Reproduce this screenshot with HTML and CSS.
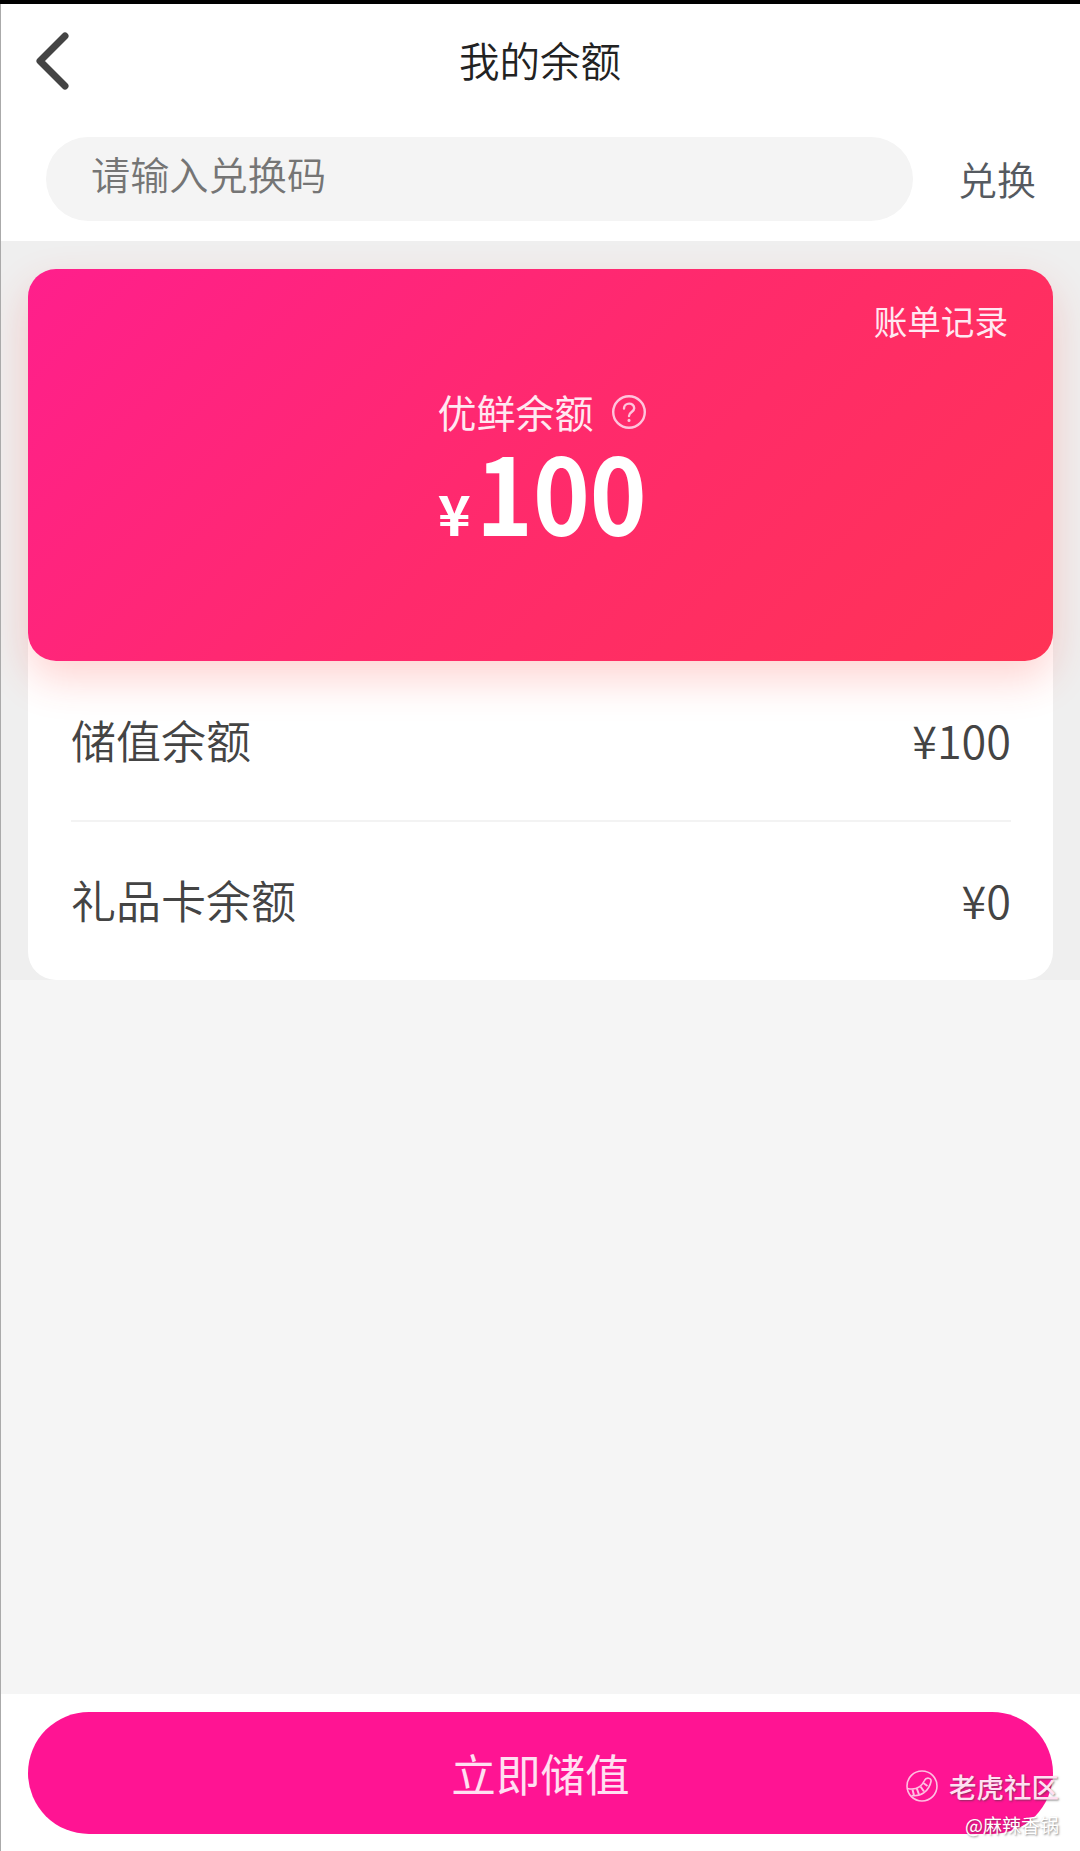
FILE: index.html
```html
<!DOCTYPE html>
<html lang="zh-CN">
<head>
  <meta charset="UTF-8">
  <meta name="viewport" content="width=device-width, initial-scale=1.0">
  <title>我的余额</title>
  <link rel="stylesheet" href="styles.css">
</head>
<body>

<div class="page">
  <header class="header">
    <svg class="back" width="40" height="64" viewBox="0 0 40 64" fill="none" stroke="#444" stroke-width="7" stroke-linecap="round" stroke-linejoin="round">
      <path d="M32 7 L7 32 L32 57"/>
    </svg>
    <h1>我的余额</h1>
  </header>

  <div class="redeem">
    <input class="code" type="text" placeholder="请输入兑换码">
    <span class="redeem-btn">兑换</span>
  </div>

  <main class="account">
    <section class="card">
      <div class="bill">账单记录</div>
      <div class="label">
        <span>优鲜余额</span>
        <svg width="36" height="36" viewBox="0 0 36 36" fill="none" stroke="#ffc4dc" stroke-width="2.4" stroke-linecap="round">
          <circle cx="18" cy="18" r="15.8"/>
          <path d="M13 14.5 C13 8 23.2 8 23.2 14.2 C23.2 18 18 18 18 22"/>
          <path d="M18 26.3 V26.6" stroke-width="3"/>
        </svg>
      </div>
      <div class="total"><span class="unit">¥</span><span class="sum">100</span></div>
    </section>
    <section class="detail">
      <div class="row"><span>储值余额</span><span>¥100</span></div>
      <div class="row"><span>礼品卡余额</span><span>¥0</span></div>
    </section>
  </main>

  <footer class="footer">
    <button class="recharge">立即储值</button>
  </footer>
</div>

<div class="mark">
  <div class="mark-name">
    <svg width="34" height="34" viewBox="0 0 34 34" fill="none" stroke="#ffc0e2" stroke-width="1.6">
      <circle cx="17" cy="17" r="15"/>
      <path d="M2.5 19.5 C11 21.5 16.5 17.5 19.5 11.5 C21 8 26.8 8.5 26 12.5 C24 22 16 28 6.5 26.5"/>
      <path d="M7.5 20.5 L9 26.5 M11.8 19.5 L14 25.5 M15.5 17.5 L19 22.5 M18.3 14 L22.5 17" stroke-width="2"/>
    </svg>
    <span>老虎社区</span>
  </div>
  <div class="mark-user">@麻辣香锅</div>
</div>

</body>
</html>
```

FILE: styles.css
```css
* {
  box-sizing: border-box;
}
body {
  margin: 0;
  font-family: "Noto Sans CJK SC", sans-serif;
  color: #444;
  background-color: #f5f5f5;
}
.page {
  display: flex;
  flex-direction: column;
  height: 1851px;
  border-top: 4px solid #000;
  position: relative;
}
/* thin line down the left edge */
.page::before {
  content: "";
  position: absolute;
  top: 0;
  left: 0;
  width: 1px;
  height: 100%;
  background-color: #aaa;
  z-index: 2;
}
.header {
  display: grid;
  grid-template-columns: 80px 1fr 80px;
  align-items: center;
  height: 113px;
  background-color: #fff;
}
.back {
  margin-left: 33px;
}
.header h1 {
  margin: 0;
  padding-bottom: 2px;
  font-size: 40.5px;
  font-weight: 350;
  line-height: 60px;
  text-align: center;
  color: #222;
}
.redeem {
  display: flex;
  align-items: center;
  height: 124px;
  padding: 0 44px 0 46px;
  background-color: #fff;
}
.code {
  width: 867px;
  height: 84px;
  padding: 0 45px 12px;
  border: 0;
  border-radius: 42px;
  background-color: #f4f4f4;
  font: 350 39.2px "Noto Sans CJK SC", sans-serif;
}
.code::placeholder {
  color: #757575;
}
.redeem-btn {
  margin-left: 45px;
  padding-bottom: 2px;
  font-size: 39px;
  line-height: 58px;
  color: #555a60;
  font-weight: 350;
}
.account {
  height: 739px;
  padding: 28px 27px 0 28px;
  background-color: #efefef;
}
.card {
  display: flex;
  flex-direction: column;
  position: relative;
  height: 392px;
  border-radius: 28px;
  background: linear-gradient(135deg, #ff1f8c 0%, #ff2a6c 50%, #ff3355 100%);
  box-shadow: 0 18px 42px rgba(255, 60, 50, 0.22);
  color: #fff;
}
.bill {
  align-self: flex-end;
  margin: 27px 45px 0 0;
  font-size: 33.6px;
  line-height: 50px;
  font-weight: 400;
  color: #ffe8f1;
}
.label {
  display: flex;
  align-items: center;
  justify-content: center;
  gap: 17px;
  height: 58px;
  margin-top: 36px;
  padding-left: 3px;
  font-size: 39px;
  line-height: 58px;
  font-weight: 400;
  color: #ffe8f1;
}
.label svg {
  margin-top: 2px;
}
.total {
  display: flex;
  align-items: baseline;
  justify-content: center;
  height: 100px;
  padding-left: 3px;
  line-height: 100px;
  font-weight: 700;
}
.unit {
  font-size: 56px;
}
/* condensed digits */
.sum {
  margin: 0 -17px 0 5px;
  font-size: 106px;
  transform: scaleX(0.91);
  transform-origin: left;
}
.detail {
  height: 347px;
  margin-top: -28px;
  padding: 27px 42px 0 43px;
  border-radius: 0 0 28px 28px;
  background-color: #fff;
}
.row {
  display: flex;
  align-items: center;
  justify-content: space-between;
  height: 160px;
  padding-bottom: 2px;
  font-size: 45px;
  font-weight: 350;
}
.row + .row {
  padding-bottom: 3px;
  border-top: 2px solid #f3f3f3;
}
.footer {
  height: 157px;
  margin-top: auto;
  padding: 18px 27px 17px 28px;
  background-color: #fff;
}
.recharge {
  display: block;
  width: 100%;
  height: 122px;
  padding: 0 0 2px 0;
  border: 0;
  border-radius: 61px;
  background-color: #ff1493;
  font: 400 44.6px "Noto Sans CJK SC", sans-serif;
  color: #ffe0f2;
}
.mark {
  position: absolute;
  right: 21px;
  bottom: 14px;
  color: #ffe0f2;
  text-shadow: 1px 1px 2px rgba(60, 60, 60, 0.6);
}
.mark-name {
  display: flex;
  align-items: center;
  justify-content: flex-end;
  gap: 10px;
  height: 40px;
  margin-bottom: 7px;
  font-size: 27.5px;
  font-weight: 500;
}
.mark-user {
  font-size: 19px;
  line-height: 24px;
  text-align: right;
  color: #fff;
}
```
